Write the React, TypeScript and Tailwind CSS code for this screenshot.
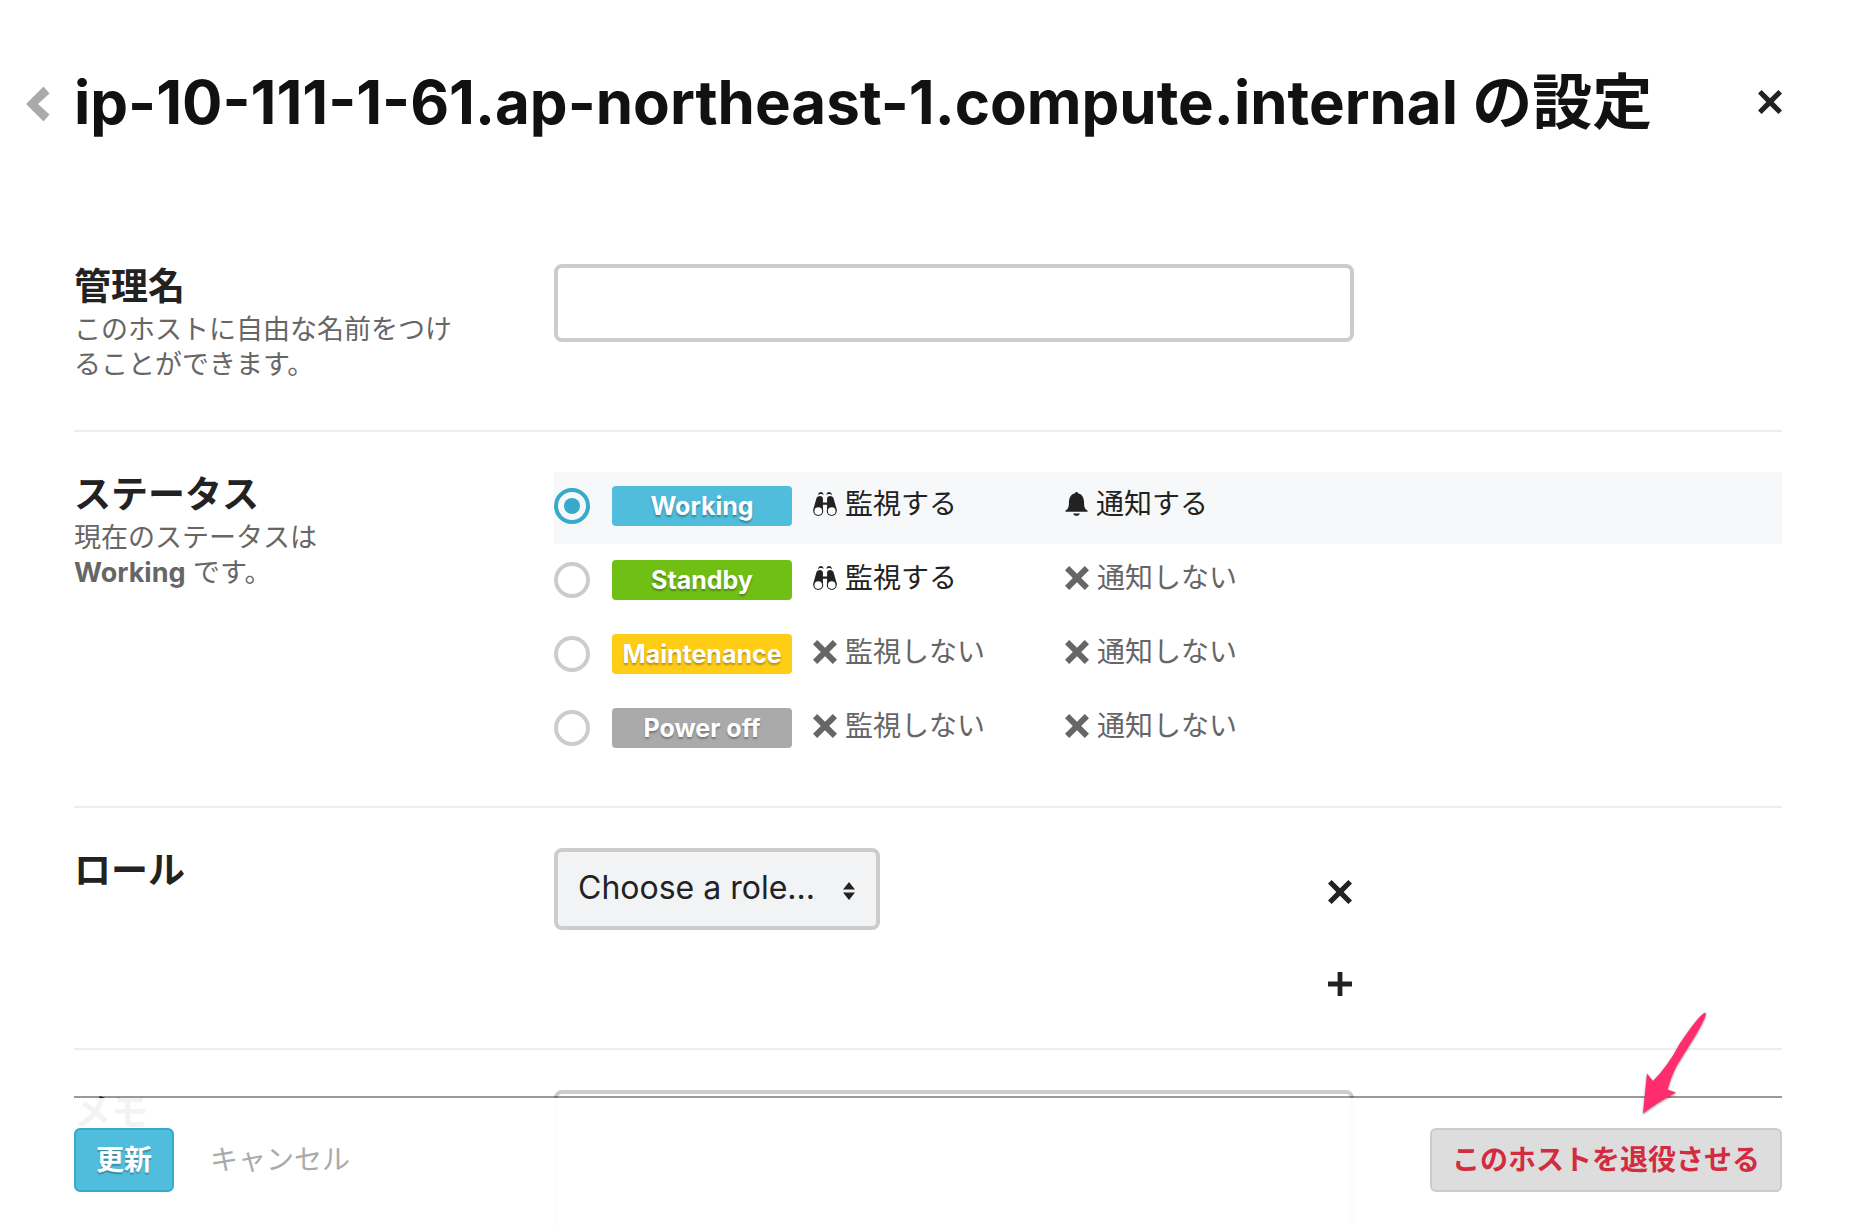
import { useState } from "react";
import type { ReactNode } from "react";

function ChevronIcon() {
  return (
    <svg viewBox="0 0 24 36" className="h-9 w-6 fill-current" aria-hidden="true">
      <path d="M17.5 .5L23.5 7.5L12 18L23.5 28.5L17.5 35.5L0 18Z" />
    </svg>
  );
}

function CloseIcon() {
  return (
    <svg viewBox="0 0 24 24" className="size-6 fill-current" aria-hidden="true">
      <path d="M3.6 0L12 8.3L20.4 0L24 3.6L15.7 12L24 20.4L20.4 24L12 15.7L3.6 24L0 20.4L8.3 12L0 3.6Z" />
    </svg>
  );
}

function PlusIcon() {
  return (
    <svg viewBox="0 0 24 24" className="size-6 fill-current" aria-hidden="true">
      <path d="M9.6 0h4.8v9.6H24v4.8h-9.6V24H9.6v-9.6H0V9.6h9.6z" />
    </svg>
  );
}

function CrossIcon() {
  return (
    <svg viewBox="0 0 24 24" className="size-6 shrink-0 fill-current" aria-hidden="true">
      <path d="M4.2 0L12 7.8L19.8 0L24 4.2L16.2 12L24 19.8L19.8 24L12 16.2L4.2 24L0 19.8L7.8 12L0 4.2Z" />
    </svg>
  );
}

function BinocularsIcon() {
  return (
    <svg viewBox="0 0 73 75" className="size-6 shrink-0 fill-current" aria-hidden="true">
      <path d="M14 11C15 3 20 0 24 0S31 3 32 9C28 5 19 5 14 11Z" />
      <path d="M59 11C58 3 53 0 49 0S42 3 41 9C45 5 54 5 59 11Z" />
      <path d="M10 19C14 10 28 10 30 20V33H43V20C45 10 59 10 63 19L73 54V60H43V40H30V60H0V54Z" />
      <circle cx="15.5" cy="59.5" r="15.5" />
      <circle cx="57.5" cy="59.5" r="15.5" />
      <circle cx="15.5" cy="59.5" r="12" className="fill-white" />
      <circle cx="57.5" cy="59.5" r="12" className="fill-white" />
    </svg>
  );
}

function BellIcon() {
  return (
    <svg viewBox="0 0 69 75" className="h-6 w-[23px] shrink-0 fill-current" aria-hidden="true">
      <path d="M30 4C30-1 39-1 39 4C52 7 57 17 58 30C58 47 60 53 69 58V62H0V58C9 53 11 47 11 30C12 17 17 7 30 4Z" />
      <path d="M24 67H45C43 73 39 74 34.5 74S26 73 24 67Z" />
    </svg>
  );
}

function PinkArrow() {
  return (
    <svg
      viewBox="0 0 68 106"
      className="pointer-events-none absolute right-[72px] bottom-[109px] h-[106px] w-[68px] overflow-visible drop-shadow-[0_1px_1px_rgba(0,0,0,0.45)]"
      aria-hidden="true"
    >
      <path
        fill="#ff2d6e"
        d="M61.5 2.500Q63.500 1 64 3Q62 11 49.500 31Q40 46 34 56Q29 66 25.500 78.500L34 81.500Q16 91 1 102.500Q3 82 5 62.500L11 70Q26 55 37.500 33Q55 7 61.500 2.500Z"
      />
    </svg>
  );
}

type Status = { name: string; color: string; watch: boolean; notify: boolean };

const statuses: Status[] = [
  { name: "Working", color: "bg-[#4fbddb]", watch: true, notify: true },
  { name: "Standby", color: "bg-[#70bf15]", watch: true, notify: false },
  { name: "Maintenance", color: "bg-[#ffcc16]", watch: false, notify: false },
  { name: "Power off", color: "bg-[#aaaaaa]", watch: false, notify: false },
];

function Flag({ on, icon, children }: { on: boolean; icon: ReactNode; children: ReactNode }) {
  return (
    <span className={`flex items-center gap-2 text-[28px] leading-9 ${on ? "text-[#222]" : "text-[#666]"}`}>
      {on ? icon : <CrossIcon />}
      <span>{children}</span>
    </span>
  );
}

function Section({
  title,
  note,
  last = false,
  children,
}: {
  title: string;
  note?: ReactNode;
  last?: boolean;
  children: ReactNode;
}) {
  return (
    <section className={`mb-10 flex pb-10 ${last ? "" : "border-b-2 border-[#eee]"}`}>
      <div className="w-[390px] shrink-0">
        <h2 className="text-[37px] leading-[46px] font-bold">{title}</h2>
        {note && <p className="mt-0.5 mb-2 text-[27px] leading-[35px] text-[#666]">{note}</p>}
      </div>
      <div className="ml-[90px] min-w-0 grow">{children}</div>
    </section>
  );
}

export default function App() {
  const [status, setStatus] = useState("Working");

  return (
    <div className="relative h-screen overflow-hidden bg-white font-['Inter','Noto_Sans_CJK_JP',sans-serif] text-[#222]">
      <header className="flex items-center gap-6 pt-[62px] pr-[74px] pb-[122px] pl-[26px]">
        <a href="#back" aria-label="戻る" className="mt-1 text-[#aaa]">
          <ChevronIcon />
        </a>
        <h1 className="grow text-[60px] leading-20 font-bold whitespace-nowrap text-[#111]">
          ip-10-111-1-61.ap-northeast-1.compute.internal の設定
        </h1>
        <button type="button" aria-label="閉じる">
          <CloseIcon />
        </button>
      </header>

      <form className="px-[74px]" onSubmit={(e) => e.preventDefault()}>
        <Section title="管理名" note="このホストに自由な名前をつけることができます。">
          <input
            type="text"
            aria-label="管理名"
            className="block h-[78px] w-full max-w-[800px] rounded-lg border-4 border-[#ccc] px-5 text-[32px]"
          />
        </Section>

        <Section
          title="ステータス"
          note={
            <>
              現在のステータスは
              <br />
              <strong className="font-bold">{status}</strong> です。
            </>
          }
        >
          <div role="radiogroup" aria-label="ステータス" className="flex flex-col gap-0.5">
            {statuses.map((s) => (
              <label
                key={s.name}
                className={`flex h-[72px] items-start pt-3.5 ${status === s.name ? "bg-[#f7f8fa]" : ""}`}
              >
                <input
                  type="radio"
                  name="status"
                  checked={status === s.name}
                  onChange={() => setStatus(s.name)}
                  className="mt-0.5 size-9 shrink-0 appearance-none rounded-full border-4 border-[#ccc] bg-white bg-clip-content p-1.5 checked:border-[#36aacc] checked:bg-[#36aacc]"
                />
                <span
                  className={`ml-[22px] w-[180px] rounded text-center text-[25px] leading-10 font-bold text-white [text-shadow:0_2px_2px_rgba(0,0,0,0.3)] ${s.color}`}
                >
                  {s.name}
                </span>
                <span className="ml-[21px] w-[252px]">
                  <Flag on={s.watch} icon={<BinocularsIcon />}>
                    {s.watch ? "監視する" : "監視しない"}
                  </Flag>
                </span>
                <Flag on={s.notify} icon={<BellIcon />}>
                  {s.notify ? "通知する" : "通知しない"}
                </Flag>
              </label>
            ))}
          </div>
        </Section>

        <Section title="ロール">
          <div className="flex max-w-[800px] flex-col gap-[30px] pr-0.5">
            <div className="flex items-center justify-between">
              <div className="relative">
                <select
                  aria-label="ロール"
                  className="block h-[82px] w-[326px] appearance-none rounded-lg border-4 border-[#ccc] bg-[#f2f3f5] pr-12 pb-0.5 pl-5 text-[32px]"
                >
                  <option>Choose a role...</option>
                </select>
                <svg
                  viewBox="0 0 12 18"
                  className="pointer-events-none absolute top-[34px] right-[25px] h-[18px] w-3 fill-current"
                  aria-hidden="true"
                >
                  <path d="M6 0L12 7.5H0ZM6 18L0 10.5H12Z" />
                </svg>
              </div>
              <button type="button" aria-label="ロールを削除" className="mt-1.5">
                <CloseIcon />
              </button>
            </div>
            <button type="button" aria-label="ロールを追加" className="flex h-12 items-center self-end">
              <PlusIcon />
            </button>
          </div>
        </Section>

        <Section title="メモ" last>
          <textarea
            aria-label="メモ"
            className="block h-[240px] w-full max-w-[800px] resize-none rounded-lg border-4 border-[#ccc] p-5 text-[32px]"
          />
        </Section>
      </form>

      <footer className="absolute inset-x-0 bottom-0 mx-[74px] flex items-center border-t-2 border-black/40 bg-white/95 bg-clip-padding pt-[30px] pb-[34px]">
        <button
          type="submit"
          className="h-16 rounded-md border-2 border-[#36aacc] bg-[#4fbddb] px-5 text-[28px] leading-10 font-bold text-white [text-shadow:0_2px_1px_rgba(0,0,0,0.25)]"
        >
          更新
        </button>
        <button type="button" className="ml-9 text-[28px] leading-10 text-[#aaa]">
          キャンセル
        </button>
        <button
          type="button"
          className="ml-auto h-16 rounded-md border-2 border-[#ccc] bg-[#ddd] px-5 text-[28px] leading-10 font-bold text-[#d32b40]"
        >
          このホストを退役させる
        </button>
        <PinkArrow />
      </footer>
    </div>
  );
}
